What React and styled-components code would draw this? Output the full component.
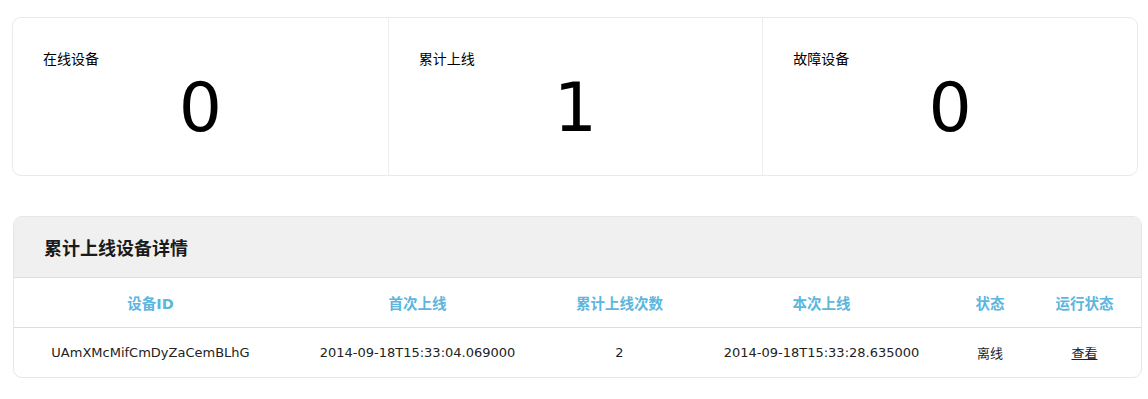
import React from "react";
import styled, { createGlobalStyle } from "styled-components";

const GlobalStyle = createGlobalStyle`
	body {
		margin: 0;
		background: #fff;
		font-family: "DejaVu Sans", "Noto Sans CJK SC", sans-serif;
		color: #222;
	}
`;

const stats = [
	{ id: 1, label: "在线设备", value: 0 },
	{ id: 2, label: "累计上线", value: 1 },
	{ id: 3, label: "故障设备", value: 0 },
];

const columns = ["设备ID", "首次上线", "累计上线次数", "本次上线", "状态", "运行状态"];

const rows = [
	{
		id: "UAmXMcMifCmDyZaCemBLhG",
		first: "2014-09-18T15:33:04.069000",
		count: 2,
		last: "2014-09-18T15:33:28.635000",
		status: "离线",
	},
];

export default function App() {
	return (
		<>
			<GlobalStyle />
			<Page>
				<StatsCard>
					{stats.map((item) => (
						<StatBox key={item.id}>
							<StatLabel>{item.label}</StatLabel>
							<StatValue>{item.value}</StatValue>
						</StatBox>
					))}
				</StatsCard>
				<DetailCard>
					<DetailHead>累计上线设备详情</DetailHead>
					<HeadRow>
						{columns.map((col) => (
							<HeadCell key={col}>{col}</HeadCell>
						))}
					</HeadRow>
					{rows.map((row) => (
						<DataRow key={row.id}>
							<Cell>{row.id}</Cell>
							<Cell>{row.first}</Cell>
							<Cell>{row.count}</Cell>
							<Cell>{row.last}</Cell>
							<Cell>{row.status}</Cell>
							<Cell>
								<ViewLink href="#">查看</ViewLink>
							</Cell>
						</DataRow>
					))}
				</DetailCard>
			</Page>
		</>
	);
}

const Page = styled.div`
	padding-top: 17px;
`;
const StatsCard = styled.div`
	margin-left: 12px;
	width: 1126px;
	box-sizing: border-box;
	border: 1px solid #eaeaea;
	border-radius: 9px;
	display: grid;
	grid-template-columns: 1fr 1fr 1fr;
`;
const StatBox = styled.div`
	padding: 30px 30px 33px;
	& + & {
		border-left: 1px solid #eeeeee;
	}
`;
const StatLabel = styled.div`
	font-family: "Noto Sans CJK SC", sans-serif;
	font-size: 14px;
	line-height: 20px;
	color: #000;
`;
const StatValue = styled.div`
	margin-top: 6px;
	font-family: "DejaVu Sans", sans-serif;
	font-size: 68px;
	line-height: 68px;
	text-align: center;
	color: #000;
`;
const DetailCard = styled.div`
	margin: 40px 0 0 13px;
	width: 1129px;
	box-sizing: border-box;
	border: 1px solid #e6e6e6;
	border-radius: 9px;
	overflow: hidden;
`;
const DetailHead = styled.div`
	height: 60px;
	display: flex;
	align-items: center;
	padding-left: 30px;
	background: #f0f0f0;
	border-bottom: 1px solid #dddddd;
	font-family: "Noto Sans CJK SC", sans-serif;
	font-size: 18px;
	font-weight: 700;
	color: #1a1a1a;
`;
const Row = styled.div`
	display: grid;
	grid-template-columns: 273px 261px 143px 261px 76px 1fr;
	align-items: center;
`;
const HeadRow = styled(Row)`
	height: 49px;
	border-bottom: 1px solid #dddddd;
`;
const DataRow = styled(Row)`
	height: 49px;
`;
const HeadCell = styled.div`
	text-align: center;
	font-size: 14.5px;
	font-weight: 700;
	color: #5cb6de;
`;
const Cell = styled.div`
	text-align: center;
	font-size: 13px;
	color: #222;
`;
const ViewLink = styled.a`
	color: #222;
	text-decoration: underline;
`;
